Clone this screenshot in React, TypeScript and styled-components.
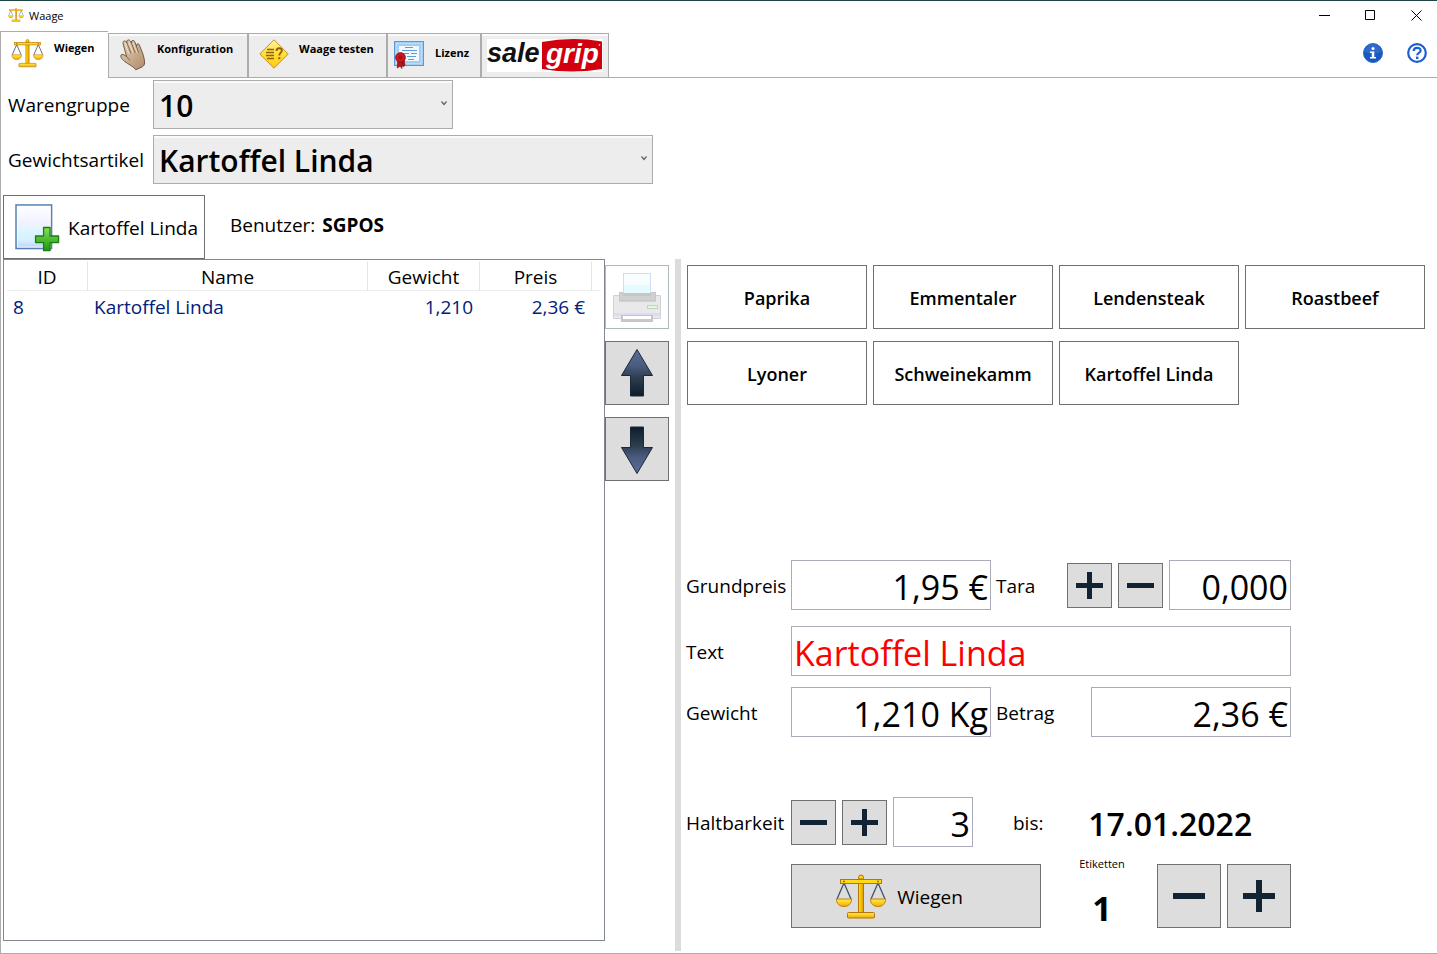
import React from 'react';
import styled, { createGlobalStyle, css } from 'styled-components';

const GlobalStyle = createGlobalStyle`
  * { box-sizing: border-box; }
  body {
    margin: 0;
    background: #fff;
    color: #000;
    font-family: "Open Sans", "Noto Sans", sans-serif;
    font-size: 19px;
  }
  button, input, select { font-family: inherit; color: inherit; margin: 0; border-radius: 0; }
`;

const Window = styled.div`
  min-height: 100vh;
  display: flex;
  flex-direction: column;
  border-top: 1px solid #1f4546;
`;

const TitleBar = styled.header`
  height: 30px;
  display: flex;
  align-items: center;
  gap: 5px;
  padding: 0 0 2px 8px;
  font-size: 11px;
`;

const WindowButtons = styled.div`
  display: flex;
  gap: 4px;
  margin-left: auto;
`;

const WindowButton = styled.button`
  width: 42px;
  height: 28px;
  display: grid;
  place-items: center;
  padding: 0;
  border: 0;
  background: none;
`;

const TabBar = styled.nav`
  height: 47px;
  display: flex;
  align-items: flex-end;
`;

const Tab = styled.button<{ $width: number; $active?: boolean; $tight?: boolean }>`
  display: flex;
  align-items: flex-start;
  flex: none;
  width: ${p => p.$width}px;
  height: 45px;
  padding: 5px 0 0 ${p => (p.$tight ? 5 : 10)}px;
  border: 1px solid #acacac;
  background: #ededed;
  box-shadow: inset 0 2px #fafafa;
  font-size: 11px;
  font-weight: 700;
  line-height: 16px;
  white-space: nowrap;
  ${p => p.$active && css`
    height: 47px;
    border-right: 0;
    border-bottom: 0;
    background: #fff;
    box-shadow: none;
  `}
`;

const TabText = styled.span<{ $top: number }>`
  margin-left: 10px;
  padding-top: ${p => p.$top}px;
`;

const TabRest = styled.div`
  flex: 1;
  height: 47px;
  display: flex;
  justify-content: flex-end;
  align-items: center;
  gap: 24px;
  padding: 0 10px 2px 0;
  border-bottom: 1px solid #acacac;
`;

const RoundButton = styled.button`
  width: 20px;
  height: 20px;
  display: block;
  padding: 0;
  border: 0;
  background: none;
`;

const Content = styled.main`
  flex: 1;
  display: flex;
  flex-direction: column;
  border-left: 1px solid #acacac;
  border-bottom: 1px solid #acacac;
`;

const Selection = styled.div`
  display: grid;
  grid-template-columns: 145px minmax(0, 1fr);
  align-items: center;
  row-gap: 6px;
  padding: 2px 7px 0;
`;

const SelectBox = styled.div<{ $width: number }>`
  position: relative;
  width: ${p => p.$width}px;
  max-width: 100%;
  svg { position: absolute; right: 5px; top: 20px; pointer-events: none; }
`;

const Select = styled.select`
  display: block;
  appearance: none;
  width: 100%;
  height: 49px;
  padding: 2px 24px 0 5px;
  border: 1px solid #acacac;
  background: #ededed;
  box-shadow: inset 0 2px #fafafa;
  font-size: 30px;
  font-weight: 600;
`;

const ArticleBar = styled.div`
  display: flex;
  align-items: flex-start;
  gap: 25px;
  padding: 11px 2px 0;
`;

const AddButton = styled.button`
  width: 202px;
  height: 64px;
  display: flex;
  align-items: center;
  gap: 8px;
  padding: 2px 6px 0 10px;
  border: 1px solid #707070;
  background: #fff;
  font-size: 19px;
  white-space: nowrap;
`;

const User = styled.p`
  margin: 0;
  padding-top: 17px;
  line-height: 26px;
  strong { margin-left: 2px; }
`;

const Panes = styled.div`
  flex: 1;
  display: grid;
  grid-template-columns: minmax(0, 674fr) 6px minmax(0, 756fr);
`;

const ListPane = styled.section`
  display: flex;
  padding: 0 6px 12px 2px;
`;

const ListFrame = styled.div`
  flex: 1;
  min-width: 0;
  padding: 2px 3px;
  border: 1px solid #828790;
`;

const Table = styled.table`
  width: 100%;
  table-layout: fixed;
  border-collapse: separate;
  border-spacing: 0;
  line-height: 26px;
`;

const HeadCell = styled.th<{ $width?: number }>`
  width: ${p => (p.$width ? `${p.$width}px` : 'auto')};
  height: 29px;
  padding: 2px 0 0;
  border-bottom: 1px solid #ececec;
  border-right: ${p => (p.$width ? '1px solid #e4e4e4' : '0')};
  font-weight: 400;
`;

const Cell = styled.td<{ $right?: boolean }>`
  padding: ${p => (p.$right ? '3px 7px 3px 0' : '3px 0 3px 6px')};
  color: #00207c;
  text-align: ${p => (p.$right ? 'right' : 'left')};
`;

const SideButtons = styled.div`
  width: 64px;
  display: flex;
  flex-direction: column;
  gap: 12px;
  padding-top: 6px;
`;

const IconButton = styled.button<{ $size: number }>`
  width: ${p => p.$size}px;
  height: ${p => p.$size}px;
  flex: none;
  display: grid;
  place-items: center;
  padding: 0;
  border: 1px solid #707070;
  background: #ddd;
  &:disabled { border-color: #adb9bb; background: #fff; }
`;

const Splitter = styled.div`
  margin-bottom: 2px;
  background: #dcdcdc;
`;

const WorkPane = styled.section`
  display: flex;
  flex-direction: column;
  padding: 6px 6px 25px 6px;
`;

const Products = styled.div`
  flex: 1;
  display: grid;
  grid-template-columns: repeat(auto-fill, 180px);
  grid-auto-rows: 64px;
  gap: 12px 6px;
`;

const ProductButton = styled.button`
  padding: 2px 4px 0;
  border: 1px solid #707070;
  background: #fff;
  font-size: 18px;
  font-weight: 600;
`;

const Form = styled.form`
  width: 604px;
  max-width: 100%;
  display: flex;
  flex-direction: column;
`;

const FormRow = styled.div<{ $gap?: number }>`
  display: flex;
  align-items: center;
  gap: 6px;
  margin-top: ${p => p.$gap ?? 0}px;
`;

const LabelRow = styled(FormRow)`
  align-items: flex-end;
`;

const Label = styled.label<{ $width: number }>`
  width: ${p => p.$width}px;
  flex: none;
  margin-left: -1px;
  padding-top: 2px;
  white-space: nowrap;
`;

const Until = styled.span`
  padding: 2px 0 0 34px;
`;

const Field = styled.input<{ $width?: number; $red?: boolean }>`
  ${p => (p.$width ? css`width: ${p.$width}px; flex: none;` : css`flex: 1; min-width: 0;`)}
  height: 50px;
  padding: 4px 2px 0;
  border: 1px solid #abaab8;
  background: #fff;
  font-size: 34px;
  text-align: ${p => (p.$red ? 'left' : 'right')};
  color: ${p => (p.$red ? '#f00' : '#000')};
`;

const BestBefore = styled.output`
  flex: 1;
  padding-top: 4px;
  text-align: center;
  font-size: 32px;
  font-weight: 600;
  line-height: 46px;
`;

const WeighButton = styled.button`
  width: 250px;
  height: 64px;
  display: flex;
  align-items: center;
  justify-content: center;
  gap: 10px;
  margin-left: 104px;
  padding: 2px 34px 0 0;
  border: 1px solid #707070;
  background: #ddd;
  font-size: 19px;
`;

const Labels = styled.div`
  flex: 1;
  height: 72px;
  padding-left: 6px;
  text-align: center;
  font-size: 11px;
  line-height: 16px;
`;

const LabelCount = styled.output`
  display: block;
  padding-top: 16px;
  font-size: 34px;
  font-weight: 700;
  line-height: 40px;
`;

const ScaleIcon = ({ size }: { size: number }) => (
  <svg width={size} height={size} viewBox="0 0 52 52" aria-hidden="true">
    <defs>
      <linearGradient id="gold" x1="0" y1="0" x2="0" y2="1">
        <stop offset="0" stopColor="#fff04a" />
        <stop offset="1" stopColor="#f2a900" />
      </linearGradient>
      <linearGradient id="post" x1="0" y1="0" x2="1" y2="0">
        <stop offset="0" stopColor="#ffe800" />
        <stop offset="1" stopColor="#e49a00" />
      </linearGradient>
    </defs>
    <path d="M9 12 2 28M9 12l7 16M43 12l-7 16M43 12l7 16" stroke="#44506a" strokeWidth="1.300" fill="none" />
    <path d="M1.500 28h15c0 5-3 7.500-7.500 7.500S1.500 33 1.500 28zM35.500 28h15c0 5-3 7.500-7.500 7.500s-7.500-2.500-7.500-7.500z" fill="url(#gold)" stroke="#c77d0a" />
    <circle cx="26" cy="6.500" r="2.500" fill="#ffd800" stroke="#b8740a" />
    <rect x="23.500" y="8" width="5" height="35" fill="url(#post)" stroke="#b8740a" />
    <rect x="5.500" y="8.500" width="41" height="4" fill="#ffd91a" stroke="#b8740a" />
    <rect x="12.500" y="41.500" width="27" height="5.500" rx="1" fill="url(#gold)" stroke="#b8740a" />
    <circle cx="9" cy="10.500" r="1" fill="#a86400" />
    <circle cx="43" cy="10.500" r="1" fill="#a86400" />
  </svg>
);

const HandIcon = () => (
  <svg width="28" height="32" viewBox="0 0 28 32" aria-hidden="true">
    <defs>
      <linearGradient id="skin" x1="0" y1="0" x2="1" y2="1">
        <stop offset="0" stopColor="#e6d2b8" />
        <stop offset="1" stopColor="#ad8b69" />
      </linearGradient>
    </defs>
    <path
      d="M4 4.200C3.600 2 6 1.200 7.200 2.800L8 4 7.800 2.600C7.800.6 10.400.300 11.300 2l1.200 2.300-.1-1.400c.2-1.900 2.600-2 3.300-.2l1.900 5.100-.1-1.700c.2-1.700 2.400-1.700 2.900 0 .7 2.500 2.200 5 3.300 8.300 1 3.200 2 6.800 1.900 9.600 0 1.400-.8 2.900-2.200 3.800l-6.600 3c-2-2.500-4.300-3.900-7-5.600C6 22.800 2.200 20.400 1.800 17.200c-.1-1.900 1.900-2.400 3.200-1.300l2.600 1.700C6.500 13 5 8.700 4 4.200z"
      fill="url(#skin)"
      stroke="#6f5945"
    />
    <path d="M8 4l4 10.500M12.500 4.300l3.700 9.700M17.600 7.800l2 6M7.600 17.600l3.400 4" stroke="#866a4e" fill="none" />
    <path d="M6 4.500l4 10.500M10 3.500l4 10.500M14.300 4l3.900 10" stroke="#f3e5d2" strokeWidth=".8" fill="none" />
  </svg>
);

const TestIcon = () => (
  <svg width="30" height="30" viewBox="0 0 30 30" aria-hidden="true">
    <defs>
      <linearGradient id="sign" x1="0" y1="0" x2="0" y2="1">
        <stop offset="0" stopColor="#fff3a0" />
        <stop offset=".5" stopColor="#ffdf3a" />
        <stop offset="1" stopColor="#ffc814" />
      </linearGradient>
    </defs>
    <path d="M15 .8 29.200 15 15 29.200.8 15z" fill="url(#sign)" stroke="#c89018" strokeLinejoin="round" />
    <path d="M8 10.500h7M7 13.500h8M7 16.500h8M8 19.500h7" stroke="#93610c" strokeWidth="1.300" />
    <path d="M17.500 12c0-3.800 5.400-3.500 5.400-.4 0 2-2.600 2.200-2.600 4.900" fill="none" stroke="#93610c" strokeWidth="1.900" />
    <rect x="19.300" y="18.200" width="2" height="2" fill="#93610c" />
  </svg>
);

const LicenceIcon = () => (
  <svg width="32" height="30" viewBox="0 0 32 30" aria-hidden="true">
    <rect x="1.500" y="2.500" width="29" height="24" fill="#9ccbf0" stroke="#5a9ad4" />
    <rect x="3.500" y="4.500" width="25" height="20" fill="none" stroke="#c9e5fa" strokeWidth="1.500" strokeDasharray="2 1" />
    <rect x="5.500" y="6.500" width="21" height="16" fill="#f1f8fe" stroke="#a4cbee" />
    <path d="M12 8.500h8M9 11.500h15M9 14.500h7M18 14.500h6M14 17.500h9M15 20.500h6" stroke="#5f9cd6" />
    <path d="M5 20l-.8 9 3-2 1.600 2.500 1.200-9zM9 20l1 7.500 2-1-1-7z" fill="#c41318" stroke="#7f0a10" strokeWidth=".7" />
    <circle cx="7.500" cy="18.500" r="4.800" fill="#d01a20" stroke="#8e0c12" />
    <circle cx="7.500" cy="18.500" r="2.200" fill="#b00e14" />
  </svg>
);

const LogoArt = styled.svg`
  display: block;
  overflow: visible;
`;

const Logo = () => (
  <LogoArt width="116" height="33" viewBox="0 0 116 33" role="img" aria-label="salegrip">
    <rect width="116" height="33" fill="#fff" />
    <path d="M55 3Q85-2.500 115 2.500v27.500Q85 35 55 30z" fill="#d2000f" />
    <g fontFamily="Liberation Sans, sans-serif" fontWeight="700" fontStyle="italic">
      <text x="0" y="23" fill="#111" fontSize="27">sale</text>
      <text x="59" y="24" fill="#fff" fontSize="28">grip</text>
    </g>
    <circle cx="112.500" cy="6" r=".8" fill="#fff" />
  </LogoArt>
);

const InfoIcon = () => (
  <svg width="20" height="20" viewBox="0 0 20 20" aria-hidden="true">
    <circle cx="10" cy="10" r="9.500" fill="#1958bd" stroke="#2a68c8" />
    <path d="M2 9a8 8 0 0 1 16 0Q10 12 2 9z" fill="#3a76d0" opacity=".6" />
    <circle cx="10" cy="5.500" r="1.500" fill="#fff" />
    <path d="M7 8.500h4.300V14H13v1.500H7V14h1.700v-4H7z" fill="#fff" />
  </svg>
);

const HelpIcon = () => (
  <svg width="20" height="20" viewBox="0 0 20 20" aria-hidden="true">
    <circle cx="10" cy="10" r="8.800" fill="#fff" stroke="#1d5fd0" strokeWidth="2.200" />
    <path d="M6.700 8c0-4.300 6.900-4 6.900-.6 0 2.500-3.400 2.300-3.400 4.800" fill="none" stroke="#1d5fd0" strokeWidth="2.200" />
    <rect x="9" y="13.600" width="2.400" height="2.400" fill="#1d5fd0" />
  </svg>
);

const AddPageIcon = () => (
  <svg width="48" height="52" viewBox="0 0 46 50" aria-hidden="true">
    <defs>
      <linearGradient id="page" x1="0" y1="0" x2="0" y2="1">
        <stop offset="0" stopColor="#fff" />
        <stop offset=".45" stopColor="#f0f1ff" />
        <stop offset=".55" stopColor="#dff6ff" />
        <stop offset=".8" stopColor="#d8f0ff" />
        <stop offset="1" stopColor="#bcd0f8" />
      </linearGradient>
      <linearGradient id="plus" x1="0" y1="0" x2="0" y2="1">
        <stop offset="0" stopColor="#86e05a" />
        <stop offset="1" stopColor="#179a0c" />
      </linearGradient>
    </defs>
    <rect x="2" y="2" width="35.500" height="43.500" fill="url(#page)" stroke="#5580b4" strokeWidth="1.500" />
    <rect x="3.500" y="3.500" width="32.500" height="40.500" fill="none" stroke="#fff" opacity=".7" />
    <path d="M29.500 24.500h6.500v8.500H44.500v6.500H36v8h-6.500v-8H21.500v-6.500h8z" fill="url(#plus)" stroke="#1d7d14" strokeWidth="1.300" strokeLinejoin="round" />
  </svg>
);

const PrinterIcon = () => (
  <svg width="50" height="52" viewBox="0 0 50 52" aria-hidden="true">
    <path d="M1.500 24.500h6v6h36v-6h5v23h-47z" fill="#e9e9ec" stroke="#d0d0d6" />
    <rect x="7.500" y="21.500" width="36" height="8" fill="#d0d0d0" stroke="#c6c6c6" />
    <rect x="11.500" y="2.500" width="27" height="20" fill="#f8fdff" stroke="#cfdff2" />
    <rect x="12" y="14" width="26" height="8" fill="#e4fbff" />
    <rect x="11" y="22" width="28" height="3" fill="#c6c6c6" />
    <rect x="2" y="42" width="46" height="3" fill="#dcdcf4" />
    <rect x="35.500" y="34.500" width="10" height="3" fill="#e6f5e2" stroke="#c2d4bf" />
    <rect x="9.500" y="44.500" width="31" height="6" fill="#c8c8c8" stroke="#c4c4c4" />
    <rect x="11" y="45" width="28" height="3" fill="#fff" />
  </svg>
);

const ArrowIcon = ({ down }: { down?: boolean }) => (
  <svg width="34" height="50" viewBox="0 0 34 50" aria-hidden="true">
    <defs>
      <linearGradient id="arrow" x1="0" y1="0" x2="0" y2="1">
        <stop offset="0" stopColor="#5a6f96" />
        <stop offset=".35" stopColor="#4a5b80" />
        <stop offset=".6" stopColor="#2d3e50" />
        <stop offset="1" stopColor="#0d1d2a" />
      </linearGradient>
    </defs>
    <path
      d="M17 1.500 32.500 27.500H23.500V48H10.500V27.500H1.500z"
      fill="url(#arrow)"
      stroke="#1b2838"
      strokeLinejoin="round"
      transform={down ? 'rotate(180 17 25.500)' : undefined}
    />
  </svg>
);

const SignIcon = ({ size, thickness, plus }: { size: number; thickness: number; plus?: boolean }) => {
  const start = (size - thickness) / 2;
  return (
    <svg width={size} height={size} viewBox={`0 0 ${size} ${size}`} aria-hidden="true">
      <rect x="0" y={start} width={size} height={thickness} fill="#122434" />
      {plus && <rect x={start} y="0" width={thickness} height={size} fill="#122434" />}
    </svg>
  );
};

const Chevron = () => (
  <svg width="8" height="7" viewBox="0 0 8 7" aria-hidden="true">
    <path d="M1.500 1.500 4 4.500l2.500-3" fill="none" stroke="#606060" strokeWidth="1.200" />
  </svg>
);

const StepButton = ({ plus, large, label }: { plus?: boolean; large?: boolean; label: string }) => (
  <IconButton type="button" $size={large ? 64 : 45} aria-label={label}>
    <SignIcon size={large ? 32 : 27} thickness={large ? 6 : 5} plus={plus} />
  </IconButton>
);

const products = ['Paprika', 'Emmentaler', 'Lendensteak', 'Roastbeef', 'Lyoner', 'Schweinekamm', 'Kartoffel Linda'];

const rows = [{ id: 8, name: 'Kartoffel Linda', weight: '1,210', price: '2,36 €' }];

export default function App() {
  return (
    <Window>
      <GlobalStyle />
      <TitleBar>
        <ScaleIcon size={16} />
        <span>Waage</span>
        <WindowButtons>
          <WindowButton aria-label="Minimieren">
            <svg width="11" height="11"><path d="M0 5.500h11" stroke="#000" /></svg>
          </WindowButton>
          <WindowButton aria-label="Maximieren">
            <svg width="11" height="11"><path d="M.5.500h9v9h-9z" stroke="#000" fill="none" /></svg>
          </WindowButton>
          <WindowButton aria-label="Schließen">
            <svg width="11" height="11"><path d="M.5.500l10 10M10.500.500l-10 10" stroke="#000" /></svg>
          </WindowButton>
        </WindowButtons>
      </TitleBar>

      <TabBar>
        <Tab $width={108} $active>
          <ScaleIcon size={33} />
          <TabText $top={3}>Wiegen</TabText>
        </Tab>
        <Tab $width={140}>
          <HandIcon />
          <TabText $top={2}>Konfiguration</TabText>
        </Tab>
        <Tab $width={139}>
          <TestIcon />
          <TabText $top={2}>Waage testen</TabText>
        </Tab>
        <Tab $width={94} $tight>
          <LicenceIcon />
          <TabText $top={6}>Lizenz</TabText>
        </Tab>
        <Tab $width={128} $tight><Logo /></Tab>
        <TabRest>
          <RoundButton aria-label="Info"><InfoIcon /></RoundButton>
          <RoundButton aria-label="Hilfe"><HelpIcon /></RoundButton>
        </TabRest>
      </TabBar>

      <Content>
        <Selection>
          <label htmlFor="group">Warengruppe</label>
          <SelectBox $width={300}>
            <Select id="group"><option>10</option></Select>
            <Chevron />
          </SelectBox>
          <label htmlFor="article">Gewichtsartikel</label>
          <SelectBox $width={500}>
            <Select id="article"><option>Kartoffel Linda</option></Select>
            <Chevron />
          </SelectBox>
        </Selection>

        <ArticleBar>
          <AddButton><AddPageIcon />Kartoffel Linda</AddButton>
          <User>Benutzer: <strong>SGPOS</strong></User>
        </ArticleBar>

        <Panes>
          <ListPane>
            <ListFrame>
              <Table>
                <thead>
                  <tr>
                    <HeadCell $width={81}>ID</HeadCell>
                    <HeadCell $width={280}>Name</HeadCell>
                    <HeadCell $width={112}>Gewicht</HeadCell>
                    <HeadCell $width={112}>Preis</HeadCell>
                    <HeadCell as="td" />
                  </tr>
                </thead>
                <tbody>
                  {rows.map(r => (
                    <tr key={r.id}>
                      <Cell>{r.id}</Cell>
                      <Cell>{r.name}</Cell>
                      <Cell $right>{r.weight}</Cell>
                      <Cell $right>{r.price}</Cell>
                    </tr>
                  ))}
                </tbody>
              </Table>
            </ListFrame>
            <SideButtons>
              <IconButton $size={64} disabled aria-label="Drucken"><PrinterIcon /></IconButton>
              <IconButton $size={64} aria-label="Nach oben"><ArrowIcon /></IconButton>
              <IconButton $size={64} aria-label="Nach unten"><ArrowIcon down /></IconButton>
            </SideButtons>
          </ListPane>

          <Splitter />

          <WorkPane>
            <Products>
              {products.map(name => <ProductButton key={name}>{name}</ProductButton>)}
            </Products>

            <Form>
              <FormRow>
                <Label htmlFor="base" $width={99}>Grundpreis</Label>
                <Field id="base" $width={200} defaultValue="1,95 €" />
                <Label htmlFor="tare" $width={65}>Tara</Label>
                <StepButton plus label="Tara erhöhen" />
                <StepButton label="Tara verringern" />
                <Field id="tare" defaultValue="0,000" />
              </FormRow>
              <FormRow $gap={16}>
                <Label htmlFor="text" $width={99}>Text</Label>
                <Field id="text" $red defaultValue="Kartoffel Linda" />
              </FormRow>
              <FormRow $gap={11}>
                <Label htmlFor="weight" $width={99}>Gewicht</Label>
                <Field id="weight" $width={200} defaultValue="1,210 Kg" />
                <Label htmlFor="amount" $width={89}>Betrag</Label>
                <Field id="amount" defaultValue="2,36 €" />
              </FormRow>
              <FormRow $gap={60}>
                <Label htmlFor="days" $width={99}>Haltbarkeit</Label>
                <StepButton label="Haltbarkeit verringern" />
                <StepButton plus label="Haltbarkeit erhöhen" />
                <Field id="days" $width={80} defaultValue="3" />
                <Until>bis:</Until>
                <BestBefore>17.01.2022</BestBefore>
              </FormRow>
              <LabelRow $gap={9}>
                <WeighButton type="button"><ScaleIcon size={52} />Wiegen</WeighButton>
                <Labels>
                  Etiketten
                  <LabelCount>1</LabelCount>
                </Labels>
                <StepButton large label="Weniger Etiketten" />
                <StepButton large plus label="Mehr Etiketten" />
              </LabelRow>
            </Form>
          </WorkPane>
        </Panes>
      </Content>
    </Window>
  );
}
